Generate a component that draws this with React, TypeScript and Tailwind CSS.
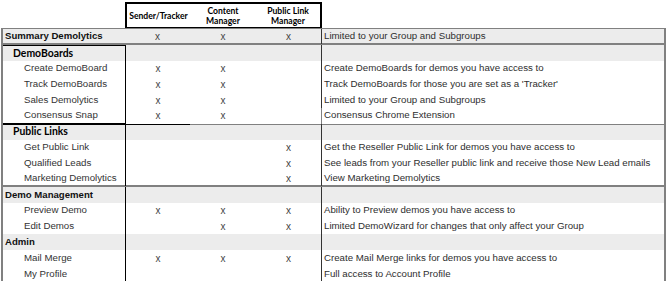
import { FC } from "react";

interface Row {
  label: string;
  level: 0 | 1 | 2;
  marks: [boolean, boolean, boolean];
  desc: string;
  topBlack?: boolean;
  bottomBlack?: boolean;
  bottomGray?: boolean;
}

const rows: Row[] = [
  { label: "Summary Demolytics", level: 0, marks: [true, true, true], desc: "Limited to your Group and Subgroups", bottomGray: true },
  { label: "DemoBoards", level: 1, marks: [false, false, false], desc: "", topBlack: true },
  { label: "Create DemoBoard", level: 2, marks: [true, true, false], desc: "Create DemoBoards for demos you have access to" },
  { label: "Track DemoBoards", level: 2, marks: [true, true, false], desc: "Track DemoBoards for those you are set as a 'Tracker'" },
  { label: "Sales Demolytics", level: 2, marks: [true, true, false], desc: "Limited to your Group and Subgroups" },
  { label: "Consensus Snap", level: 2, marks: [true, true, false], desc: "Consensus Chrome Extension", bottomBlack: true },
  { label: "Public Links", level: 1, marks: [false, false, false], desc: "" },
  { label: "Get Public Link", level: 2, marks: [false, false, true], desc: "Get the Reseller Public Link for demos you have access to" },
  { label: "Qualified Leads", level: 2, marks: [false, false, true], desc: "See leads from your Reseller public link and receive those New Lead emails" },
  { label: "Marketing Demolytics", level: 2, marks: [false, false, true], desc: "View Marketing Demolytics", bottomGray: true },
  { label: "Demo Management", level: 0, marks: [false, false, false], desc: "" },
  { label: "Preview Demo", level: 2, marks: [true, true, true], desc: "Ability to Preview demos you have access to" },
  { label: "Edit Demos", level: 2, marks: [false, true, true], desc: "Limited DemoWizard for changes that only affect your Group" },
  { label: "Admin", level: 0, marks: [false, false, false], desc: "" },
  { label: "Mail Merge", level: 2, marks: [true, true, true], desc: "Create Mail Merge links for demos you have access to" },
  { label: "My Profile", level: 2, marks: [false, false, false], desc: "Full access to Account Profile" },
];

const App: FC = () => {
  return (
    <div className="w-[670px] h-[281px] bg-white overflow-hidden font-['Liberation_Sans',Arial,sans-serif]">
      {/* column headers */}
      <div className="h-[28px] pt-[2px] pl-[125px]">
        <div className="w-[197px] h-[27px] border-2 border-black grid grid-cols-[63px_66px_64px] items-center text-center font-['Lato',sans-serif] font-bold text-[8.6px] leading-[10px] text-black">
          <div>Sender/Tracker</div>
          <div>
            Content
            <br />
            Manager
          </div>
          <div>
            Public Link
            <br />
            Manager
          </div>
        </div>
      </div>

      {/* table */}
      <div className="ml-[1px] w-[665px] border-x-2 border-t border-b-2 border-[#808080]">
        {rows.map((r) => {
          const gray = r.level < 2;
          return (
            <div
              key={r.label}
              className={`grid grid-cols-[122px_65px_66px_65px_1fr] h-[15.8px] ${gray ? "bg-[#ececec]" : "bg-white"} ${r.bottomGray ? "border-b-2 border-[#808080]" : ""}`}
            >
              <div
                className={`flex items-center whitespace-nowrap ${r.level === 0 ? "pl-[2px] font-bold text-[9.6px] text-[#111]" : r.level === 1 ? "pl-[10px] font-['Lato',sans-serif] font-bold text-[10.4px] text-black" : "pl-[21px] text-[9.7px] text-[#333]"} ${r.topBlack ? "border-t border-black" : ""} ${r.bottomBlack ? "border-b-2 border-black" : ""}`}
              >
                {r.label}
              </div>
              {r.marks.map((m, i) => (
                <div
                  key={i}
                  className={`flex items-center justify-center text-[10px] text-[#444] ${i === 0 && r.label !== "Summary Demolytics" ? "border-l border-black" : ""} ${r.bottomBlack ? "border-b border-[#808080]" : ""}`}
                >
                  {m ? "x" : ""}
                </div>
              ))}
              <div
                className={`flex items-center pl-[2px] whitespace-nowrap text-[9.7px] text-[#2e2e2e] border-l border-[#333] ${r.bottomBlack ? "border-b border-[#808080]" : ""}`}
              >
                {r.desc}
              </div>
            </div>
          );
        })}
      </div>
    </div>
  );
};

export default App;
